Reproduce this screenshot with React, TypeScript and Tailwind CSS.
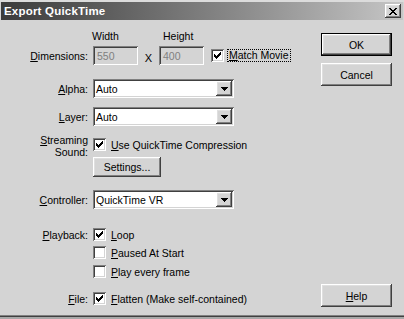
import React from "react";

const raised =
  "shadow-[inset_-1px_-1px_#404040,inset_1px_1px_#ffffff,inset_-2px_-2px_#808080,inset_2px_2px_#dfdfdf]";
const sunken =
  "shadow-[inset_1px_1px_#808080,inset_-1px_-1px_#ffffff,inset_2px_2px_#404040,inset_-2px_-2px_#d4d4d4]";

function CheckMark() {
  return (
    <svg width="7" height="7" viewBox="0 0 7 7" shapeRendering="crispEdges">
      <rect x="6" y="0" width="1" height="1" fill="#000" />
      <rect x="5" y="1" width="2" height="1" fill="#000" />
      <rect x="0" y="2" width="1" height="1" fill="#000" />
      <rect x="4" y="2" width="3" height="1" fill="#000" />
      <rect x="0" y="3" width="2" height="1" fill="#000" />
      <rect x="3" y="3" width="3" height="1" fill="#000" />
      <rect x="0" y="4" width="5" height="1" fill="#000" />
      <rect x="1" y="5" width="3" height="1" fill="#000" />
      <rect x="2" y="6" width="1" height="1" fill="#000" />
    </svg>
  );
}

function Check({ checked }: { checked?: boolean }) {
  return (
    <span
      className={`w-[13px] h-[13px] bg-white shrink-0 flex items-center justify-center ${sunken}`}
    >
      {checked && <CheckMark />}
    </span>
  );
}

function Arrow() {
  return (
    <svg width="7" height="4" viewBox="0 0 7 4" shapeRendering="crispEdges">
      <rect x="0" y="0" width="7" height="1" fill="#000" />
      <rect x="1" y="1" width="5" height="1" fill="#000" />
      <rect x="2" y="2" width="3" height="1" fill="#000" />
      <rect x="3" y="3" width="1" height="1" fill="#000" />
    </svg>
  );
}

function Select({ value }: { value: string }) {
  return (
    <div
      className={`w-[141px] h-[19px] bg-white flex items-center p-[2px] ${sunken}`}
    >
      <span className="flex-1 pl-[1px] leading-[12px]">{value}</span>
      <span
        className={`w-[16px] h-[15px] bg-[#d4d4d4] flex items-center justify-center ${raised}`}
      >
        <Arrow />
      </span>
    </div>
  );
}

function Label({ children }: { children: React.ReactNode }) {
  return (
    <div className="w-[88px] shrink-0 text-right mr-[5px]">{children}</div>
  );
}

function U({ children }: { children: React.ReactNode }) {
  return (
    <span className="underline decoration-1 underline-offset-[1px]">
      {children}
    </span>
  );
}

function CheckRow({
  checked,
  children,
}: {
  checked?: boolean;
  children: React.ReactNode;
}) {
  return (
    <div className="flex items-center h-[13px]">
      <Check checked={checked} />
      <span className="ml-[5px]">{children}</span>
    </div>
  );
}

function Button({
  children,
  isDefault,
}: {
  children: React.ReactNode;
  isDefault?: boolean;
}) {
  if (isDefault) {
    return (
      <div className="w-[71px] h-[23px] border border-black flex">
        <div
          className={`flex-1 flex items-center justify-center bg-[#d4d4d4] ${raised}`}
        >
          {children}
        </div>
      </div>
    );
  }
  return (
    <div
      className={`w-[71px] h-[23px] flex items-center justify-center bg-[#d4d4d4] ${raised}`}
    >
      {children}
    </div>
  );
}

export default function App() {
  return (
    <div className="w-[404px] h-[319px] bg-[#d4d4d4] overflow-hidden flex flex-col font-['Liberation_Sans',Arial,sans-serif] text-[10.5px] leading-[12px] text-black">
      {/* title bar */}
      <div className="h-[2px] shrink-0 bg-[#dcdcdc]" />
      <div className="h-[18px] shrink-0 mx-[1px] flex items-center bg-gradient-to-r from-[#3c3c3c] to-[#c6c6c6]">
        <span className="ml-[3px] flex-1 text-white font-bold text-[11.5px] tracking-[0.2px]">
          Export QuickTime
        </span>
        <span
          className={`w-[16px] h-[14px] mr-[2px] bg-[#d4d4d4] flex items-center justify-center ${raised}`}
        >
          <svg width="8" height="7" viewBox="0 0 8 7" shapeRendering="crispEdges">
            <rect x="0" y="0" width="2" height="1" fill="#000" />
            <rect x="6" y="0" width="2" height="1" fill="#000" />
            <rect x="1" y="1" width="2" height="1" fill="#000" />
            <rect x="5" y="1" width="2" height="1" fill="#000" />
            <rect x="2" y="2" width="4" height="1" fill="#000" />
            <rect x="3" y="3" width="2" height="1" fill="#000" />
            <rect x="2" y="4" width="4" height="1" fill="#000" />
            <rect x="1" y="5" width="2" height="1" fill="#000" />
            <rect x="5" y="5" width="2" height="1" fill="#000" />
            <rect x="0" y="6" width="2" height="1" fill="#000" />
            <rect x="6" y="6" width="2" height="1" fill="#000" />
          </svg>
        </span>
      </div>

      {/* body */}
      <div className="flex-1 flex">
        <div className="w-[321px] shrink-0 flex flex-col pt-[10px]">
          {/* width/height labels */}
          <div className="flex h-[12px]">
            <div className="w-[92px] shrink-0" />
            <span className="w-[71px]">Width</span>
            <span>Height</span>
          </div>

          {/* dimensions */}
          <div className="flex items-center h-[19px] mt-[4px]">
            <Label>
              <U>D</U>imensions:
            </Label>
            <div
              className={`w-[45px] h-[19px] flex items-center pl-[4px] text-[#808080] ${sunken}`}
            >
              550
            </div>
            <span className="w-[21px] text-center text-[11px] pt-[4px]">X</span>
            <div
              className={`w-[45px] h-[19px] flex items-center pl-[4px] text-[#808080] ${sunken}`}
            >
              400
            </div>
            <div className="ml-[7px] flex items-center">
              <Check checked />
              <span className="ml-[3px] border border-dotted border-black px-[1px] leading-[11px]">
                <U>M</U>atch Movie
              </span>
            </div>
          </div>

          {/* alpha */}
          <div className="flex items-center mt-[14px]">
            <Label>
              <U>A</U>lpha:
            </Label>
            <Select value="Auto" />
          </div>

          {/* layer */}
          <div className="flex items-center mt-[9px]">
            <Label>
              <U>L</U>ayer:
            </Label>
            <Select value="Auto" />
          </div>

          {/* streaming sound */}
          <div className="flex mt-[8px]">
            <Label>
              <div>
                <U>S</U>treaming
              </div>
              <div>Sound:</div>
            </Label>
            <div className="flex flex-col pt-[4px]">
              <CheckRow checked>
                <U>U</U>se QuickTime Compression
              </CheckRow>
              <div
                className={`mt-[6px] w-[68px] h-[20px] flex items-center justify-center bg-[#d4d4d4] ${raised}`}
              >
                Settings...
              </div>
            </div>
          </div>

          {/* controller */}
          <div className="flex items-center mt-[13px]">
            <Label>
              <U>C</U>ontroller:
            </Label>
            <Select value="QuickTime VR" />
          </div>

          {/* playback */}
          <div className="flex mt-[19px]">
            <Label>
              <div className="h-[13px] flex items-center justify-end">
                <span>
                  <U>P</U>layback:
                </span>
              </div>
            </Label>
            <div className="flex flex-col">
              <CheckRow checked>
                <U>L</U>oop
              </CheckRow>
              <div className="mt-[5px]">
                <CheckRow>
                  <U>P</U>aused At Start
                </CheckRow>
              </div>
              <div className="mt-[6px]">
                <CheckRow>
                  <U>P</U>lay every frame
                </CheckRow>
              </div>
            </div>
          </div>

          {/* file */}
          <div className="flex mt-[14px]">
            <Label>
              <div className="h-[13px] flex items-center justify-end">
                <span>
                  <U>F</U>ile:
                </span>
              </div>
            </Label>
            <CheckRow checked>
              <U>F</U>latten (Make self-contained)
            </CheckRow>
          </div>
        </div>

        {/* buttons */}
        <div className="flex flex-col pt-[13px] pb-[8px]">
          <Button isDefault>OK</Button>
          <div className="mt-[7px]">
            <Button>Cancel</Button>
          </div>
          <div className="mt-auto">
            <Button>
              <U>H</U>elp
            </Button>
          </div>
        </div>
      </div>

      {/* bottom window edge */}
      <div className="h-[1px] shrink-0 bg-[#808080]" />
      <div className="h-[1px] shrink-0 bg-[#404040]" />
      <div className="h-[2px] shrink-0 bg-[#a8a8a8]" />
    </div>
  );
}
